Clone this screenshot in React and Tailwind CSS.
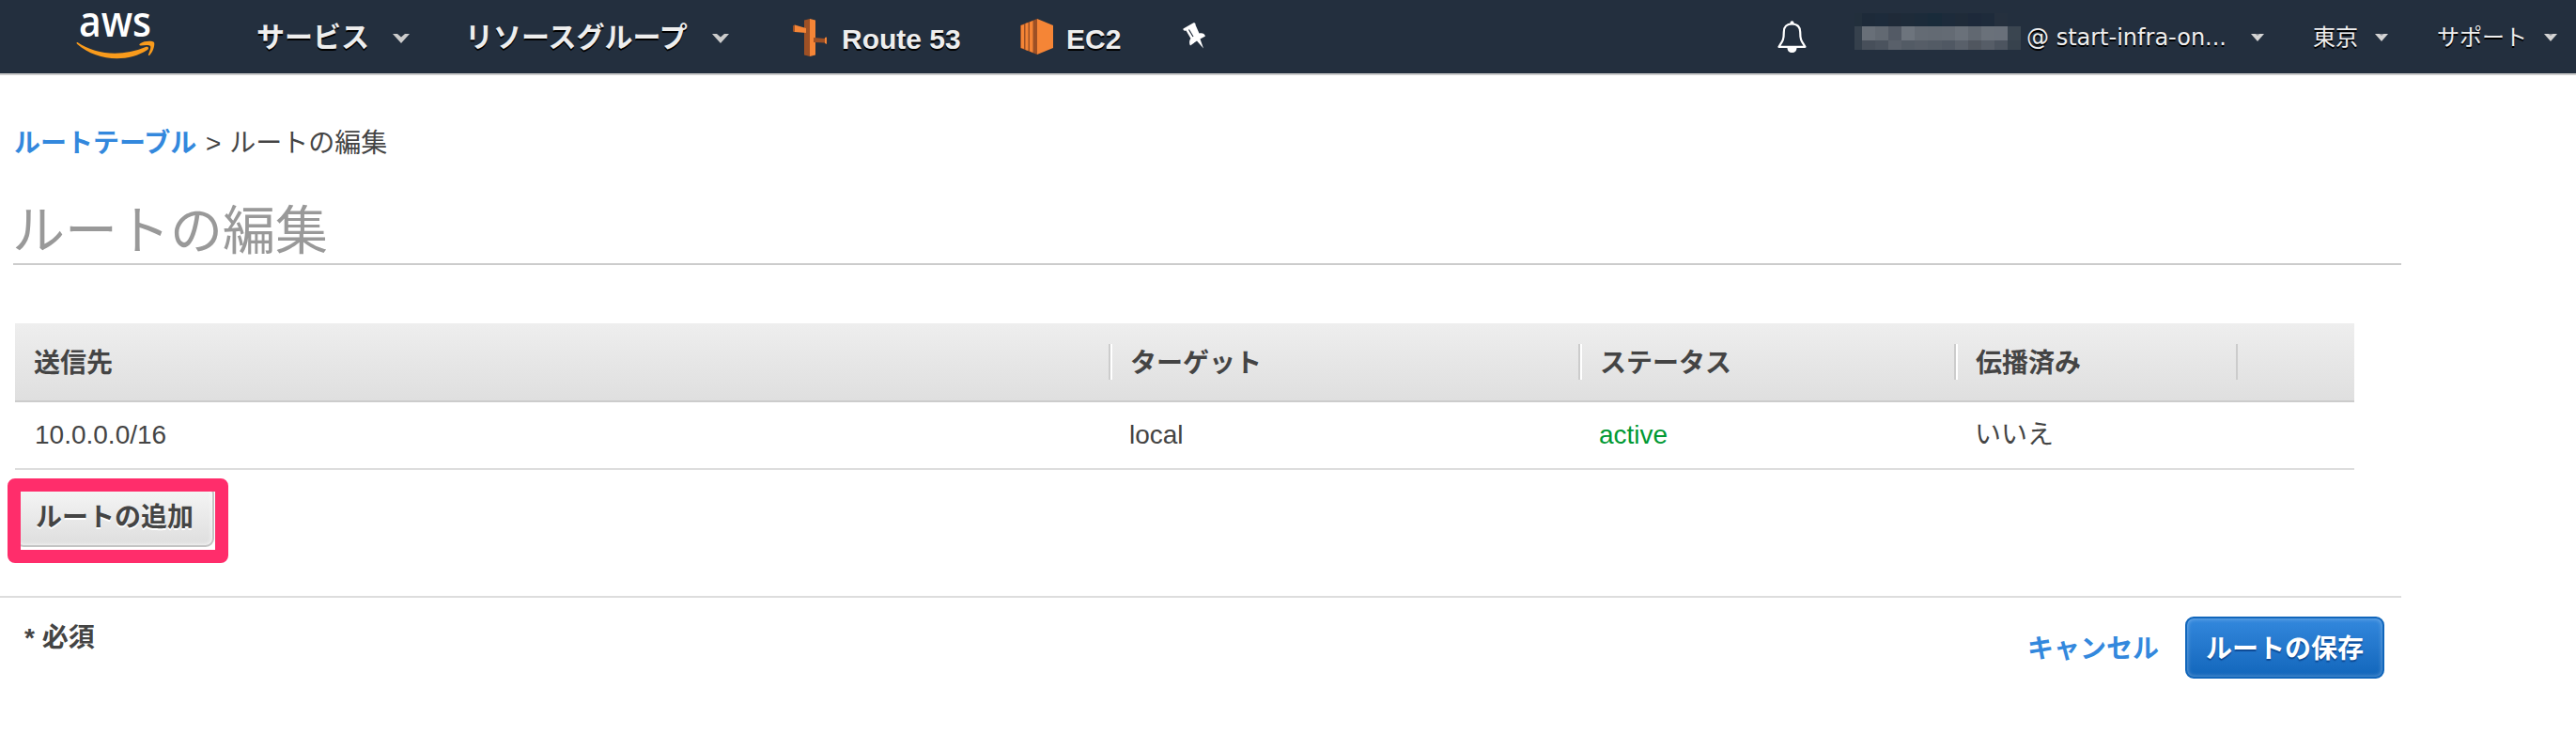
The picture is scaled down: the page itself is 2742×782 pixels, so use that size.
function Caret({ big, className }) {
  return big ? (
    <svg className={`block shrink-0 ${className}`} width="18" height="10" viewBox="0 0 18 10">
      <path d="M0 0H5L9 3.5L13 0H18L9 10Z" fill="#ccc" />
    </svg>
  ) : (
    <svg className={`block shrink-0 ${className}`} width="14" height="8" viewBox="0 0 14 8">
      <path d="M0 0H14L7 8Z" fill="#d4d4d4" />
      <path d="M4.5 0H9.5L7 2Z" fill="#8b9097" />
    </svg>
  );
}

function Logo() {
  return (
    <svg className="block shrink-0" width="84" height="78" viewBox="0 0 84 78">
      <text x="3" y="38.500" fontFamily="'Open Sans', sans-serif" fontWeight="600" fontSize="46" fill="#fff" textLength="77" lengthAdjust="spacingAndGlyphs" className="[text-shadow:none]">aws</text>
      <path d="M1.5 45C21 58.500 49 60.500 74 50C77 49 78 51.500 76 53C54 67.500 21 64.500 1.300 47C0 45.800 .5 44.500 1.500 45Z" fill="#f99b1c" />
      <path d="M68 46.500C73 43 81.500 43.500 83 45C84 47 82.500 54.500 78.500 58.500C77.500 59.500 76.500 59 77 58C78.500 54 80 50 79 49C78 47.500 73 48 69 48.400C67 48.500 67 47.200 68 46.500Z" fill="#f99b1c" />
    </svg>
  );
}

function Route53Icon() {
  return (
    <svg className="ml-[68px] mt-5 block shrink-0" width="36" height="40" viewBox="0 0 36 40">
      <path d="M12 1.500L18 0V40L12 38.500Z" fill="#9d5025" />
      <path d="M18 0L24 1.500V38.500L18 40Z" fill="#f58536" />
      <path d="M0 8L2 6.500L14 10V15L2 14L0 13Z" fill="#f58536" />
      <path d="M0 8L2 6.500V14L0 13Z" fill="#9d5025" />
      <path d="M22 20L34 21V25.500L22 25Z" fill="#9d5025" />
      <path d="M34 20L36 19.500V27L34 26Z" fill="#f58536" />
    </svg>
  );
}

function Ec2Icon() {
  return (
    <svg className="ml-[60px] mt-5 block shrink-0" width="35" height="38" viewBox="0 0 35 38">
      <path d="M0 7L18 0V38L0 31Z" fill="#9d5025" />
      <path d="M1 7L4 6V32L1 31Z" fill="#f58536" />
      <path d="M5.500 5L8.500 4V34L5.500 33Z" fill="#f58536" />
      <path d="M10 3.500L13.500 2V36L10 34.500Z" fill="#f58536" />
      <path d="M18 0L35 7V31L18 38Z" fill="#f58536" />
    </svg>
  );
}

function Pin() {
  return (
    <svg className="ml-[63px] mt-6 block shrink-0" width="25" height="29" viewBox="0 0 25 29">
      <path d="M11 0.500C12.500 0 14 1 13.500 2.500L17.500 11.500C20 10.500 23.500 11.500 24 14.500L18.500 17.500L22 27.500L15 19.500L8 24.500C6.500 22.500 7 18.500 8.500 17L3.500 8.500C1.500 9.500 0 8 0.500 6.500Z" fill="#fff" />
      <path d="M6.500 7.500L11 15" stroke="#232f3e" strokeWidth="1.200" />
    </svg>
  );
}

function Bell() {
  return (
    <svg className="ml-[608px] mt-[22px] block shrink-0" width="32" height="35" viewBox="0 0 32 35">
      <circle cx="15.500" cy="2.200" r="2" fill="#fff" />
      <path d="M15.500 3.500C9.500 3.500 6.800 7 6.800 12C6.800 20 6 21 1.500 27.800H29.500C25 21 24.200 20 24.200 12C24.200 7 21.500 3.500 15.500 3.500Z" fill="none" stroke="#fff" strokeWidth="2.200" strokeLinejoin="round" />
      <path d="M10.500 29H20.500C20.500 32 18.500 34 15.500 34S10.500 32 10.500 29Z" fill="#fff" />
    </svg>
  );
}

const mosaic = [
  ["bg-[#222f3c]", "bg-[#1d2a39]", "bg-[#1d2b3b]", "bg-[#1f2a38]", "bg-[#1e2b39]", "bg-[#1c2b3a]", "bg-[#192b3a]", "bg-[#1d2b3b]", "bg-[#1f2b39]", "bg-[#1d293a]", "bg-[#1e2b3b]", "bg-[#25303e]", "bg-[#232f3e]"],
  ["bg-[#36414d]", "bg-[#686f78]", "bg-[#626972]", "bg-[#535a65]", "bg-[#6d747d]", "bg-[#646b74]", "bg-[#636a73]", "bg-[#646b74]", "bg-[#6a717a]", "bg-[#616871]", "bg-[#6a717a]", "bg-[#69707a]", "bg-[#3a4550]"],
  ["bg-[#35404c]", "bg-[#474f5a]", "bg-[#4b535e]", "bg-[#59606a]", "bg-[#535b65]", "bg-[#565d67]", "bg-[#535b65]", "bg-[#505863]", "bg-[#59606a]", "bg-[#50565f]", "bg-[#565d67]", "bg-[#4c545f]", "bg-[#37424d]"],
];

function Mosaic() {
  return (
    <div className="mt-[14px] ml-[50px] grid w-[177px] shrink-0 grid-cols-[8px_repeat(11,14.1px)_1fr] grid-rows-[14px_15px_10px]">
      {mosaic.flat().map((c, i) => <span key={i} className={c} />)}
    </div>
  );
}

function HeadCell({ children, className }) {
  return (
    <div className={`flex h-[38px] shrink-0 items-center border-r-2 border-[#ccc] ${className}`}>
      <span className="pt-[3px]">{children}</span>
    </div>
  );
}

export default function App() {
  return (
    <div className="h-[782px] w-[2742px] overflow-hidden bg-white font-['Liberation_Sans','Noto_Sans_CJK_JP',sans-serif] text-[28px] leading-[40px] whitespace-nowrap text-[#444]">
      <header className="flex h-20 items-start overflow-hidden border-b-2 border-[#ccc] bg-[#232f3e] pl-[81px] text-[#eee] [text-shadow:0_2px_0_#000]">
        <Logo />
        <span className="mt-[20px] ml-[108px] w-[120px] shrink-0 text-[30px] font-bold">サービス</span>
        <Caret big className="mt-9 ml-[25px]" />
        <span className="mt-[20px] ml-[59px] w-[240px] shrink-0 text-[30px] font-bold">リソースグループ</span>
        <Caret big className="mt-9 ml-[23px]" />
        <Route53Icon />
        <span className="mt-[22px] ml-[16px] w-[130px] shrink-0 text-[30px] font-bold">Route 53</span>
        <Ec2Icon />
        <span className="mt-[22px] ml-[14px] w-[61px] shrink-0 text-[30px] font-bold">EC2</span>
        <Pin />
        <Bell />
        <Mosaic />
        <span className="mt-[20px] ml-[6px] w-[212px] shrink-0 font-['DejaVu_Sans',sans-serif] text-[24px]">@ start-infra-on...</span>
        <Caret className="mt-9 ml-[27px]" />
        <span className="mt-[20px] ml-[52px] w-[48px] shrink-0 text-[24px]">東京</span>
        <Caret className="mt-9 ml-[18px]" />
        <span className="mt-[20px] ml-[52px] w-[96px] shrink-0 text-[24px]">サポート</span>
        <Caret className="mt-9 ml-[18px]" />
      </header>

      <nav className="mt-[53px] flex h-[38px] pl-[15px]">
        <a className="w-[197px] font-bold text-[#38d]">ルートテーブル</a>
        <span className="ml-[7px]">&gt;</span>
        <span className="ml-[9px]">ルートの編集</span>
      </nav>

      <h1 className="ml-[14px] mt-[35px] flex h-[76px] w-[2542px] items-center border-b-2 border-[#ccc] text-[56px] leading-[76px] text-[#999]">
        <span className="-ml-px pt-[5px]">ルートの編集</span>
      </h1>

      <section className="mt-[62px] ml-4 w-[2490px]">
        <div className="flex h-[84px] items-center border-b-2 border-[#ccc] bg-linear-to-b from-[#eee] to-[#dfdfdf] font-bold">
          <HeadCell className="w-[1166px] pl-5">送信先</HeadCell>
          <HeadCell className="w-[500px] border-l-2 border-l-white pl-[19px]">ターゲット</HeadCell>
          <HeadCell className="w-[400px] border-l-2 border-l-white pl-[19px]">ステータス</HeadCell>
          <HeadCell className="w-[300px] border-l-2 border-l-white pl-[19px]">伝播済み</HeadCell>
        </div>
        <div className="flex h-[72px] items-center border-b-2 border-[#ddd] pl-[21px]">
          <span className="w-[1165px]">10.0.0.0/16</span>
          <span className="w-[500px]">local</span>
          <span className="w-[400px] text-[#093]">active</span>
          <span>いいえ</span>
        </div>
      </section>

      <div className="relative mt-4 ml-4 w-[212px]">
        <button className="flex h-[66px] w-[212px] items-center justify-center rounded-[9px] border-2 border-[#c4c4c4] bg-linear-to-b from-[#f6f6f6] to-[#dedede] pt-[3px] font-bold shadow-[inset_0_0_5px_#fff] [text-shadow:0_2px_0_#fff]">ルートの追加</button>
        <div className="absolute -top-[7px] -left-2 h-[90px] w-[235px] rounded-[8px] border-14 border-[#ff2d6b]" />
      </div>

      <footer className="mt-[52px] flex h-[100px] w-[2556px] items-start border-t-2 border-[#ddd] pl-[26px] font-bold">
        <span className="mt-[23px]">* 必須</span>
        <a className="mt-[35px] ml-auto w-[142px] text-[#38d]">キャンセル</a>
        <button className="mt-5 mr-[18px] ml-[26px] flex h-[66px] w-[212px] items-center justify-center rounded-[9px] border-2 border-[#1166bb] bg-linear-to-b from-[#3388dd] to-[#1166bb] pt-[3px] text-white shadow-[inset_0_0_5px_rgba(255,255,255,0.4)] [text-shadow:0_2px_1px_#0e4a94]">ルートの保存</button>
      </footer>
    </div>
  );
}
